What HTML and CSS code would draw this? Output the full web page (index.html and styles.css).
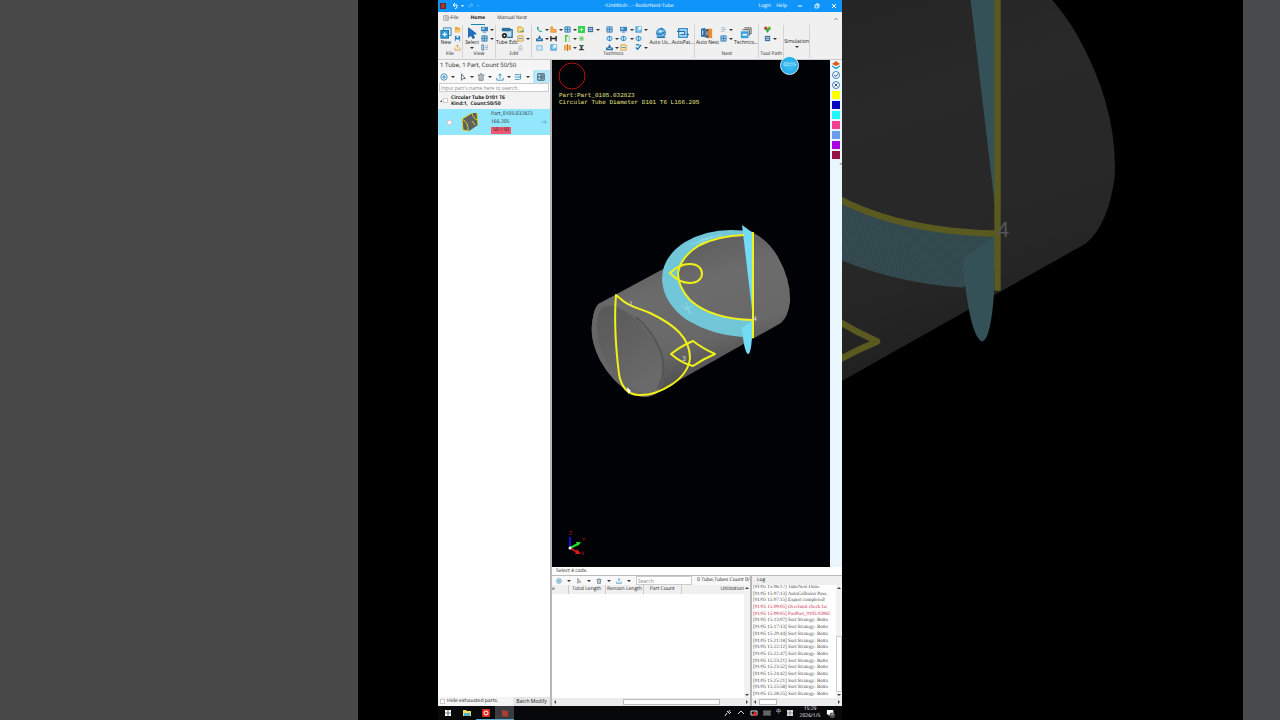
FILE: index.html
```
<!DOCTYPE html>
<html lang="en">
  <head>
    <meta charset="UTF-8" />
    <meta name="viewport" content="width=device-width, initial-scale=1.0" />
    <title>BodorNest-Tube</title>
    <link rel="stylesheet" href="styles.css">
  </head>
  <body>
    <!-- Icon and model definitions -->
    <svg class="defs" aria-hidden="true">
      <defs>
        <linearGradient id="bodyFill" x1="0.35" y1="0.2" x2="0.6" y2="0.85">
          <stop offset="0" stop-color="#626262" />
          <stop offset="0.25" stop-color="#6c6c6c" />
          <stop offset="0.7" stop-color="#686868" />
          <stop offset="1" stop-color="#525252" />
        </linearGradient>
        <linearGradient id="boreFill" x1="0" y1="0" x2="0.6" y2="1">
          <stop offset="0" stop-color="#585858" />
          <stop offset="1" stop-color="#6a6a6a" />
        </linearGradient>
        <pattern id="mesh" width="1" height="1" patternUnits="userSpaceOnUse" patternTransform="rotate(12)">
          <rect width="1" height="1" fill="#76cfe2" />
          <rect width="0.4" height="1" fill="#69b9ca" />
        </pattern>
      </defs>
      <symbol id="tube" viewBox="0 0 1280 720">
        <path fill="url(#bodyFill)" d="M600 303L665 268L712 236Q730 229 752 232Q768 240 778 257Q791 280 790 302Q788 317 781 323L655 394Q646 400 632 394Q612 382 600 360Q590 340 592 324Q594 306 600 303Z" />
        <path fill="#666" d="M600 303Q612 302 630 313Q652 331 663 359Q668 384 655 394Q646 400 632 394Q612 382 600 360Q590 340 592 324Q594 306 600 303Z" />
        <path fill="url(#boreFill)" d="M602 308Q610 303 624 311Q646 325 657 350Q665 375 657 388Q650 396 634 389Q612 375 601 350Q592 322 602 308Z" />
        <path fill="none" stroke="#555" stroke-width="2" d="M636 317Q652 330 661 352Q667 374 658 388" />
        <path fill="url(#mesh)" d="M753 232Q714 225 685 242Q662 257 662 279Q663 303 687 320Q712 335 742 337L753 331V320Q712 319 690 300Q678 288 678 273Q681 257 700 245Q720 236 745 235Z" />
        <path fill="none" stroke="#a5e9f6" stroke-width="0.500" d="M690 245L708 238M696 246L712 236M700 240L722 235M682 305L692 313M686 302L690 314M692 306L684 310" />
        <path fill="#73dcf4" d="M742 225L753 233V318Z" />
        <path fill="#73dcf4" d="M742 328L752 321V337Q751 354 748 354Q744 352 742 328Z" />
        <g fill="none" stroke="#f0f01a" stroke-width="2" stroke-linejoin="round">
          <path d="M744 235Q718 236 700 245Q681 256 678 273Q678 287 690 300Q711 319 753 320" />
          <path d="M753 232V338" />
          <path d="M616 295C614 320 616 350 619 374C621 386 626 394 638 395C658 396 688 380 690 358C690 338 675 325 650 313C638 308 628 306 622 300Z" />
          <path d="M670 273Q679 264 690 264C706 264 706 283 690 283Q679 283 670 273Z" />
          <path d="M671 354Q681 346 693 341Q702 348 715 354Q703 359 693 366Q681 363 671 354Z" />
        </g>
        <path fill="#fff" d="M627 387L631 391L628 394Z" />
      </symbol>

      <symbol id="i-plus" viewBox="0 0 10 10"><circle cx="5" cy="5" r="4" fill="none" stroke="currentColor" /><path d="M5 2.5V7.5M2.5 5H7.5" stroke="currentColor" /></symbol>
      <symbol id="i-pointer" viewBox="0 0 10 10"><path d="M3 1V9L5 7L8 7Z" fill="none" stroke="currentColor" /></symbol>
      <symbol id="i-trash" viewBox="0 0 10 10"><path d="M1 2.5H9M4 1H6M2.5 3V9H7.5V3M5 4V8" fill="none" stroke="currentColor" /></symbol>
      <symbol id="i-export" viewBox="0 0 10 10"><path d="M5 7V1M3 3L5 1L7 3M1 6V9H9V6" fill="none" stroke="currentColor" /></symbol>
      <symbol id="i-sort" viewBox="0 0 10 10"><path d="M1 2H7M1 5H9M1 8H7M8 1V8" fill="none" stroke="currentColor" /></symbol>
      <symbol id="i-panel" viewBox="0 0 10 10"><path d="M1 1H9V9H1ZM1 5H9M5 1V9M6 3H8M6 7H8" fill="none" stroke="currentColor" /></symbol>
      <symbol id="i-new" viewBox="0 0 14 14"><path d="M4 4V1H13V10H10" fill="#cfeaf9" stroke="#2a7fb8" /><rect x="1" y="4" width="9" height="9" fill="#2f9bd8" stroke="#1c6ea6" /><path d="M5.500 6V11M3 8.500H8" stroke="#fff" stroke-width="1.500" /></symbol>
      <symbol id="i-select" viewBox="0 0 14 14"><path d="M3 1L12 8L8 8.500L10 12.500L8 13.500L6 9.500L3 12Z" fill="#1e73c9" stroke="#155a9e" /></symbol>
      <symbol id="i-tubeedit" viewBox="0 0 14 14"><path d="M3 3H13V12H7" fill="#bfe3f5" stroke="#2a6c96" stroke-width="1.500" /><rect x="1" y="1" width="10" height="4" fill="#2b6f9e" /><circle cx="4" cy="10" r="3" fill="#222" /><circle cx="4" cy="10" r="1" fill="#fff" /></symbol>
      <symbol id="i-autouse" viewBox="0 0 14 14"><circle cx="7" cy="7" r="5" fill="#7fc0ea" stroke="#2b8bcb" stroke-width="1.500" /><path d="M7 1L9 3M3 7L6 9L11 6M2 12H12" fill="none" stroke="#2473ad" stroke-width="1.500" /><path d="M5 5H8" stroke="#fff" /></symbol>
      <symbol id="i-autopath" viewBox="0 0 14 14"><rect x="2" y="2" width="10" height="10" fill="#cdebf9" stroke="#2b8bcb" stroke-width="1.500" /><path d="M0 5H9V9H4M14 9H11" fill="none" stroke="#2473ad" stroke-width="1.500" /></symbol>
      <symbol id="i-autonest" viewBox="0 0 14 14"><path d="M0 2L5 1V12L0 11Z" fill="#2c6fa8" /><path d="M5 3L9 2V13L5 12Z" fill="#414d59" /><path d="M9 2H13V13H9Z" fill="#ef8b2c" /><path d="M2 4V9M7 5V10" stroke="#fff" /></symbol>
      <symbol id="i-technics" viewBox="0 0 14 14"><path d="M5 1H13V8H11M3 3H11V10" fill="#ddd" stroke="#555" /><rect x="1" y="5" width="9" height="8" fill="#38a2dc" /><path d="M3 9H8" stroke="#fff" stroke-width="2" /></symbol>

      <symbol id="s-folder" viewBox="0 0 8 8"><path d="M1 1H4L5 2H7V7H1Z" fill="#f0a03c" /><path d="M2 4H8L7 7H1Z" fill="#f8cb75" /></symbol>
      <symbol id="s-save" viewBox="0 0 8 8"><path d="M1 1H7V7H1Z" fill="#2a84c8" /><path d="M3 1H5V3H3ZM2 5H6V7H2Z" fill="#fff" /></symbol>
      <symbol id="s-tray" viewBox="0 0 8 8"><path d="M1 4V7H7V4M4 5V1M2.500 2.500L4 1L5.500 2.500" fill="none" stroke="#e39b45" /></symbol>
      <symbol id="s-tray-off" viewBox="0 0 8 8"><path d="M1 7H7M2 5H6L4 1Z" fill="none" stroke="#b5bcc2" /></symbol>
      <symbol id="s-screen" viewBox="0 0 8 8"><path d="M0 1H8V6H0Z" fill="#3c83bd" /><path d="M2 7H6" stroke="#3c83bd" /><path d="M1 2H4V4H1Z" fill="#a8d8f4" /></symbol>
      <symbol id="s-grid" viewBox="0 0 8 8"><path d="M1 1H7V7H1Z" fill="#9fd0ed" stroke="#397fb4" /><path d="M1 4H7M4 1V7" stroke="#397fb4" /></symbol>
      <symbol id="s-list" viewBox="0 0 8 8"><path d="M1 1H3V7H1Z" fill="none" stroke="#4a7fa8" /><path d="M5 2H8M5 4H8M5 6H8" stroke="#8aa8bf" /></symbol>
      <symbol id="s-note" viewBox="0 0 8 8"><path d="M1 1H5L7 3V7H1Z" fill="#fbe08a" stroke="#c89a28" /><path d="M4 6H8" stroke="#2b82bc" /></symbol>
      <symbol id="s-arc" viewBox="0 0 8 8"><path d="M2 1C1 4 4 7 7 6" fill="none" stroke="#3bb89e" stroke-width="1.500" /><circle cx="2" cy="2" r="1" fill="#2a84c8" /></symbol>
      <symbol id="s-step" viewBox="0 0 8 8"><path d="M1 1H3V4H7V7H1Z" fill="#f6b45e" stroke="#e38d25" /></symbol>
      <symbol id="s-green" viewBox="0 0 8 8"><rect width="8" height="8" fill="#35d24d" /><path d="M2 4H6M4 2V6" stroke="#d8ffd8" /></symbol>
      <symbol id="s-lead" viewBox="0 0 8 8"><path d="M0 7H8V4H6L4 0L2 4H0Z" fill="#2f75ad" /><path d="M2 5H6" stroke="#a9d5f2" /></symbol>
      <symbol id="s-h" viewBox="0 0 8 8"><path d="M1 1V7M7 1V7M1 4H7" stroke="#222" stroke-width="1.500" /></symbol>
      <symbol id="s-bars" viewBox="0 0 8 8"><path d="M2 0V8M2 1H5" stroke="#35c435" stroke-width="1.500" fill="none" /><path d="M6 1V8" stroke="#8bdc8b" /></symbol>
      <symbol id="s-dot" viewBox="0 0 8 8"><circle cx="4" cy="4" r="3" fill="#9ee29c" /><circle cx="4" cy="4" r="1" fill="#49b549" /></symbol>
      <symbol id="s-box" viewBox="0 0 8 8"><rect x="1" y="2" width="6" height="5" fill="#cfeaf8" stroke="#7cb8dc" /></symbol>
      <symbol id="s-boxes" viewBox="0 0 8 8"><rect x="1" y="1" width="6" height="6" fill="#8bcdf0" stroke="#2f93cf" /><path d="M4 1H7V4H4Z" fill="#fff" /></symbol>
      <symbol id="s-weld" viewBox="0 0 8 8"><path d="M0 1H3V7H0ZM5 1H8V7H5Z" fill="#f0a646" /><path d="M4 0V8" stroke="#b66114" /></symbol>
      <symbol id="s-stand" viewBox="0 0 8 8"><path d="M1 1H7L5 3V6H7V7H1V6H3V3Z" fill="#2b2b2b" /><path d="M3 1H5V3H3Z" fill="#4b9b6b" /></symbol>
      <symbol id="s-ring" viewBox="0 0 8 8"><ellipse cx="4" cy="4" rx="3" ry="2.500" fill="#bfe3f7" stroke="#338dca" /><path d="M4 1V7" stroke="#338dca" /></symbol>
      <symbol id="s-check" viewBox="0 0 8 8"><path d="M1 1H5M1 4L3 6L7 1" fill="none" stroke="#1c77be" stroke-width="1.500" /></symbol>
      <symbol id="s-sheet" viewBox="0 0 8 8"><path d="M1 1H7V7H1Z" fill="#fbe7bb" stroke="#d49b3a" /><path d="M2 4H6" stroke="#338dca" /></symbol>
      <symbol id="s-rgb" viewBox="0 0 8 8"><circle cx="2" cy="2.500" r="2" fill="#d8402c" /><circle cx="6" cy="2.500" r="2" fill="#7cb82d" /><path d="M1 3H7L4 8Z" fill="#2da84b" /></symbol>
      <symbol id="s-dash" viewBox="0 0 8 8"><path d="M1 2H6M2 4H7M1 6H5" stroke="#9db7c8" /></symbol>
      <symbol id="s-calc" viewBox="0 0 8 8"><rect x="1" y="1" width="6" height="6" fill="#3a6d9b" /><path d="M2 3H6M2 5H6" stroke="#cfe6f8" /></symbol>
    </svg>

    <svg class="backdrop" viewBox="0 0 1280 720" preserveAspectRatio="xMidYMid slice" aria-hidden="true">
      <rect width="358" height="720" fill="#484848" />
      <rect x="1243" width="37" height="720" fill="#484a4b" />
      <g class="ghost" transform="translate(-1388 -780) scale(3.168)">
        <use href="#tube" width="1280" height="720" />
      </g>
      <text class="ghost-mark" x="997" y="237">4</text>
    </svg>

    <div class="app">
      <header class="titlebar">
        <svg class="logo" viewBox="0 0 8 8"><rect width="8" height="8" fill="#5b2a2a" /><rect x="2" y="1" width="4" height="6" fill="#b23a2a" /></svg>
        <svg class="undo" viewBox="0 0 30 8"><path d="M4 1L2 3L4 5M2 3H6Q7 6 4 7" fill="none" stroke="#fff" /><path d="M10 3H13L11.500 5Z" fill="#fff" /><path d="M20 1L22 3L20 5M22 3H18V6" fill="none" stroke="#59b7fa" /><path d="M26 3H28L27 5Z" fill="#59b7fa" /></svg>
        <h1>&lt;Untitled&gt;.. - BodorNest-Tube</h1>
        <a href="#">Login</a>
        <a href="#">Help</a>
        <div class="window-buttons">
          <button aria-label="Minimize"><svg viewBox="0 0 6 6"><path d="M1 3H5" stroke="#fff" /></svg></button>
          <button aria-label="Restore"><svg viewBox="0 0 6 6"><path d="M1 2H4V5H1ZM2 2V1H5V4H4" fill="none" stroke="#fff" stroke-width="0.800" /></svg></button>
          <button aria-label="Close"><svg viewBox="0 0 6 6"><path d="M1 1L5 5M5 1L1 5" stroke="#fff" /></svg></button>
        </div>
      </header>

      <nav class="tabs">
        <a href="#"><svg viewBox="0 0 8 8"><path d="M1 1H7V7H1ZM3 3H6M3 5H6" fill="none" stroke="#888" /></svg>-File</a>
        <a href="#" class="active">Home</a>
        <a href="#">Manual Nest</a>
        <svg class="collapse" viewBox="0 0 8 8"><path d="M2 5L4 3L6 5" fill="none" stroke="#555" /></svg>
      </nav>

      <div class="ribbon">
        <section class="group file">
          <div class="tools">
            <button class="big"><svg><use href="#i-new" /></svg>New</button>
            <div class="small one">
              <svg><use href="#s-folder" /></svg>
              <svg><use href="#s-save" /></svg>
              <svg><use href="#s-tray" /></svg>
            </div>
          </div>
          <h2>File</h2>
        </section>
        <section class="group view">
          <div class="tools">
            <button class="big"><svg><use href="#i-select" /></svg>Select<i class="caret"></i></button>
            <div class="small two">
              <svg><use href="#s-screen" /></svg><i class="caret"></i>
              <svg><use href="#s-grid" /></svg><i class="caret"></i>
              <svg><use href="#s-list" /></svg>
            </div>
          </div>
          <h2>View</h2>
        </section>
        <section class="group edit">
          <div class="tools">
            <button class="big"><svg><use href="#i-tubeedit" /></svg>Tube Edit</button>
            <div class="small two">
              <svg><use href="#s-note" /></svg><i></i>
              <svg><use href="#s-sheet" /></svg><i class="caret"></i>
              <svg><use href="#s-tray-off" /></svg>
            </div>
          </div>
          <h2>Edit</h2>
        </section>
        <section class="group technics">
          <div class="tools">
            <div class="small nine">
              <svg><use href="#s-arc" /></svg><i class="caret"></i><svg><use href="#s-step" /></svg><i class="caret"></i><svg><use href="#s-grid" /></svg><i class="caret"></i><svg><use href="#s-green" /></svg><svg><use href="#s-calc" /></svg><i class="caret"></i>
              <svg><use href="#s-lead" /></svg><i class="caret"></i><svg><use href="#s-h" /></svg><i></i><svg><use href="#s-bars" /></svg><i class="caret"></i><svg><use href="#s-dot" /></svg><i></i><i></i>
              <svg><use href="#s-box" /></svg><i></i><svg><use href="#s-boxes" /></svg><i></i><svg><use href="#s-weld" /></svg><i class="caret"></i><svg><use href="#s-stand" /></svg><i></i><i></i>
            </div>
            <div class="small six">
              <svg><use href="#s-grid" /></svg><i></i><svg><use href="#s-screen" /></svg><i class="caret"></i><svg><use href="#s-boxes" /></svg><i class="caret"></i>
              <svg><use href="#s-ring" /></svg><i class="caret"></i><svg><use href="#s-ring" /></svg><i class="caret"></i><svg><use href="#s-ring" /></svg><i></i>
              <svg><use href="#s-lead" /></svg><i class="caret"></i><svg><use href="#s-sheet" /></svg><i></i><svg><use href="#s-check" /></svg><i class="caret"></i>
            </div>
            <button class="big"><svg><use href="#i-autouse" /></svg>Auto Us...</button>
            <button class="big"><svg><use href="#i-autopath" /></svg>AutoPat...</button>
          </div>
          <h2>Technics</h2>
        </section>
        <section class="group nest">
          <div class="tools">
            <button class="big"><svg><use href="#i-autonest" /></svg>Auto Nest</button>
            <div class="small two">
              <svg><use href="#s-dash" /></svg><i class="caret"></i>
              <svg><use href="#s-grid" /></svg><i class="caret"></i>
            </div>
            <button class="big"><svg><use href="#i-technics" /></svg>Technics...</button>
          </div>
          <h2>Nest</h2>
        </section>
        <section class="group path">
          <div class="tools">
            <div class="small two">
              <svg><use href="#s-rgb" /></svg><i></i>
              <svg><use href="#s-calc" /></svg><i class="caret"></i>
            </div>
          </div>
          <h2>Tool Path</h2>
        </section>
        <section class="group simulation">
          <button class="big">Simulation<i class="caret"></i></button>
        </section>
      </div>

      <main class="workspace">
        <aside class="parts">
          <p class="summary">1 Tube, 1 Part, Count 50/50</p>
          <div class="toolbar">
            <svg><use href="#i-plus" /></svg><i class="caret"></i>
            <svg class="dark"><use href="#i-pointer" /></svg><i class="caret"></i>
            <svg class="dark"><use href="#i-trash" /></svg><i class="caret"></i>
            <svg><use href="#i-export" /></svg><i class="caret"></i>
            <svg><use href="#i-sort" /></svg><i class="caret"></i>
            <button class="toggle" aria-label="Thumbnails"><svg><use href="#i-panel" /></svg></button>
          </div>
          <input class="search" type="text" aria-label="Part name" placeholder="Input part's name here to search." />
          <div class="part-group">
            <i class="expander"></i>
            <input type="checkbox" id="tubeGroup" />
            <label for="tubeGroup">Circular Tube D101 T6<br />Kind:1,&nbsp; Count:50/50</label>
          </div>
          <div class="part">
            <input type="checkbox" aria-label="Part_0105.032823" />
            <svg class="thumb" viewBox="0 0 20 22"><path d="M2 8L12 2L17 2L18 14L9 20L3 19Z" fill="#5f5f5f" /><path d="M2 8L3 19L8 20Q9 12 2 8L12 2Q13 8 18 9M12 10L15 14M17 2L18 14" fill="none" stroke="#d9d32a" /></svg>
            <div class="part-info">
              <span>Part_0105.032823</span>
              <span>166.205</span>
              <span class="count">50 / 50</span>
            </div>
            <svg class="arrow" viewBox="0 0 8 8"><path d="M1 4H7M5 2L7 4L5 6" fill="none" stroke="#5aa3bd" /></svg>
          </div>
          <div class="parts-footer">
            <input type="checkbox" id="hideParts" />
            <label for="hideParts">Hide exhausted parts.</label>
            <button>Batch Modify</button>
          </div>
        </aside>

        <div class="right">
          <div class="stage">
            <div class="viewport">
              <svg class="scene" viewBox="552 60 278 507" preserveAspectRatio="xMidYMid meet">
                <circle cx="572" cy="76" r="13" fill="none" stroke="#b01414" />
                <use href="#tube" width="1280" height="720" />
                <g class="mark">
                  <text x="629" y="306">1</text>
                  <text x="682" y="361">3</text>
                  <text x="753" y="321">4</text>
                </g>
                <path d="M570 548V537" stroke="#1212d8" stroke-width="2" />
                <path d="M570 548L578 544" stroke="#27e02e" stroke-width="2" />
                <path d="M576 542L581 542L578 546Z" fill="#27e02e" />
                <path d="M570 548L577 552" stroke="#d81818" stroke-width="2" />
                <path d="M577 549L581 554L575 554Z" fill="#d81818" />
                <circle cx="570" cy="548" r="1.500" fill="#fff" />
                <g class="axis">
                  <text x="569" y="535">Z</text>
                  <text x="582" y="541">Y</text>
                  <text x="581" y="555">X</text>
                </g>
              </svg>
              <p class="readout">Part:Part_0105.032823<br />Circular Tube Diameter D101 T6 L166.205</p>
              <span class="timer">02:15</span>
            </div>
            <div class="layers">
              <svg viewBox="0 0 8 8"><path d="M4 0L8 3L4 5L0 3Z" fill="#e05a1e" /><path d="M0 5L4 7L8 5L4 8Z" fill="#2aa4c8" stroke="#2aa4c8" /></svg>
              <svg viewBox="0 0 8 8"><circle cx="4" cy="4" r="3.500" fill="#fff" stroke="#1d5f9c" stroke-width="0.800" /><path d="M2 4L4 5.500L6 2.500" fill="none" stroke="#1d5f9c" /></svg>
              <svg viewBox="0 0 8 8"><circle cx="4" cy="4" r="3.500" fill="#fff" stroke="#1d5f9c" stroke-width="0.800" /><path d="M2.500 2.500L5.500 5.500M5.500 2.500L2.500 5.500" stroke="#1d5f9c" /></svg>
              <i class="swatch yellow"></i>
              <i class="swatch blue"></i>
              <i class="swatch cyan"></i>
              <i class="swatch pink"></i>
              <i class="swatch sky"></i>
              <i class="swatch purple"></i>
              <i class="swatch maroon"></i>
              <span class="more">»</span>
            </div>
          </div>
          <p class="status">Select 4 cade.</p>
          <div class="bottom">
            <section class="tubes">
              <div class="toolbar">
                <svg><use href="#i-plus" /></svg><i class="caret"></i>
                <svg class="dark"><use href="#i-pointer" /></svg><i class="caret"></i>
                <svg class="dark"><use href="#i-trash" /></svg><i class="caret"></i>
                <svg><use href="#i-export" /></svg><i class="caret"></i>
                <input class="search" type="text" aria-label="Tube name" placeholder="Search" />
                <span class="tube-count">0 Tube,Tubes Count 0/1</span>
              </div>
              <div class="table-area">
                <table>
                  <thead>
                    <tr><th class="name">e</th><th>Total Length</th><th>Remain Length</th><th>Part Count</th><th class="util">Utilization</th></tr>
                  </thead>
                </table>
                <div class="vscroll"><i class="up"></i><i class="down"></i></div>
              </div>
              <div class="hscroll"><i class="back"></i><i class="thumb"></i><i class="next"></i></div>
            </section>
            <section class="log">
              <h2>Log</h2>
              <div class="log-area">
                <ol>
                  <li>[01/05 15:06:17] TubeNest Done.</li>
                  <li>[01/05 15:07:13] AutoCollision Pass.</li>
                  <li>[01/05 15:07:15] Export completed!</li>
                  <li class="error">[01/05 15:09:05] Overlimit check fai</li>
                  <li class="error">[01/05 15:09:05] PartPart_0105.03082</li>
                  <li>[01/05 15:13:07] Sort Strategy: Botto</li>
                  <li>[01/05 15:17:13] Sort Strategy: Botto</li>
                  <li>[01/05 15:20:44] Sort Strategy: Botto</li>
                  <li>[01/05 15:21:18] Sort Strategy: Botto</li>
                  <li>[01/05 15:22:12] Sort Strategy: Botto</li>
                  <li>[01/05 15:22:47] Sort Strategy: Botto</li>
                  <li>[01/05 15:23:21] Sort Strategy: Botto</li>
                  <li>[01/05 15:23:52] Sort Strategy: Botto</li>
                  <li>[01/05 15:24:42] Sort Strategy: Botto</li>
                  <li>[01/05 15:25:21] Sort Strategy: Botto</li>
                  <li>[01/05 15:25:58] Sort Strategy: Botto</li>
                  <li>[01/05 15:28:25] Sort Strategy: Botto</li>
                </ol>
                <div class="vscroll"><i class="up"></i><i class="thumb"></i><i class="down"></i></div>
              </div>
              <div class="hscroll"><i class="back"></i><i class="thumb"></i><i class="next"></i></div>
            </section>
          </div>
        </div>
      </main>

      <footer class="taskbar">
        <button aria-label="Start"><svg viewBox="0 0 8 8"><path d="M1 1H3.700V3.700H1ZM4.300 1H7V3.700H4.300ZM1 4.300H3.700V7H1ZM4.300 4.300H7V7H4.300Z" fill="#fff" /></svg></button>
        <button aria-label="Files"><svg viewBox="0 0 8 8"><path d="M0 1H3L4 2H8V7H0Z" fill="#f3d865" /><path d="M1 4H7V7H1Z" fill="#54b6c4" /></svg></button>
        <button aria-label="Recorder" class="open"><svg viewBox="0 0 8 8"><rect width="8" height="8" rx="1" fill="#dc2b1c" /><circle cx="4" cy="4" r="2" fill="none" stroke="#fff" /></svg></button>
        <button aria-label="BodorNest-Tube" class="open current"><svg viewBox="0 0 8 8"><path d="M1 1L7 2V8L1 7Z" fill="#a8402f" /></svg></button>
        <div class="tray">
          <svg viewBox="0 0 8 8"><path d="M1 7L3 4M3 2L6 5M4 4L6 1M5 5L7 3" stroke="#ddd" fill="none" /></svg>
          <svg viewBox="0 0 8 8"><path d="M1 5L4 2L7 5" stroke="#ddd" fill="none" /></svg>
          <svg viewBox="0 0 8 8"><path d="M1 2H7V6H1Z" stroke="#ddd" fill="none" /><circle cx="5" cy="5" r="2" fill="#e02828" /></svg>
          <svg viewBox="0 0 8 8"><path d="M0 2H8V6H0ZM1 4H7M2 2V6M4 2V6M6 2V6" stroke="#aaa" fill="none" stroke-width="0.700" /></svg>
          <span>中</span>
          <svg viewBox="0 0 8 8"><path d="M1 1H7V7H1Z" fill="#ddd" /><path d="M1 4H7M4 1V7" stroke="#666" stroke-width="0.600" /></svg>
        </div>
        <time>15:29<br />2026/1/5</time>
        <div class="notices">
          <svg viewBox="0 0 10 10"><path d="M1 1H8V6H5L3 8V6H1Z" fill="#fff" /><circle cx="7" cy="7" r="3" fill="#555" /></svg>
          <span>2</span>
        </div>
      </footer>
    </div>
  </body>
</html>
```
FILE: styles.css
```
* {
  box-sizing: border-box;
}

body {
  margin: 0;
  min-height: 100vh;
  background: #000;
  color: #222;
  font-family: "Open Sans", "Noto Sans", "Noto Sans CJK SC", sans-serif;
  font-size: 5px;
  line-height: 7px;
  text-rendering: geometricPrecision;
  display: grid;
  grid-template-columns: 1fr minmax(404px, 31%) 1fr;
  overflow: hidden;
}

h1,
h2,
p,
ol {
  margin: 0;
  padding: 0;
  font-size: 5px;
  font-weight: normal;
}

a {
  color: inherit;
  text-decoration: none;
}

button {
  padding: 0;
  border: none;
  background: none;
  color: inherit;
  font: inherit;
}

input {
  margin: 0;
  font: inherit;
}

input[type="checkbox"] {
  appearance: none;
  width: 5px;
  height: 5px;
  flex: none;
  background: #fff;
  border: 1px solid #ccc;
}

.defs {
  position: absolute;
  width: 0;
  height: 0;
}

.backdrop {
  position: absolute;
  inset: 0;
  width: 100%;
  height: 100%;
}

.ghost {
  opacity: 0.38;
  filter: saturate(0.7);
}

.ghost-mark {
  fill: #555;
  font-family: "Liberation Sans", sans-serif;
  font-size: 22px;
}

.mark text {
  fill: #ddd;
  font-family: "Liberation Sans", sans-serif;
  font-size: 7px;
}

.app {
  grid-column: 2;
  position: relative;
  display: flex;
  flex-direction: column;
  height: 100vh;
  background: #f0f0f0;
}

.caret {
  flex: none;
  width: 4px;
  justify-self: center;
  border: 2px solid transparent;
  border-top-color: #333;
  border-bottom: none;
}

/* Title bar */
.titlebar {
  display: flex;
  align-items: center;
  gap: 5px;
  height: 12px;
  background: #0f95fa;
  color: #fff;
}

.titlebar .logo {
  width: 6px;
  height: 6px;
  margin-left: 2px;
}

.titlebar .undo {
  width: 30px;
  height: 8px;
}

.titlebar h1 {
  flex: 1;
  text-align: center;
  padding-left: 38px;
}

.window-buttons {
  display: flex;
  width: 50px;
}

.window-buttons button {
  flex: 1;
  display: grid;
  place-items: center;
}

.window-buttons svg {
  width: 6px;
  height: 6px;
}

/* Tabs */
.tabs {
  display: flex;
  align-items: center;
  gap: 12px;
  height: 13px;
  padding: 0 3px 0 5px;
}

.tabs a {
  display: flex;
  align-items: center;
  height: 13px;
  border-bottom: 1px solid transparent;
}

.tabs svg {
  width: 6px;
  height: 6px;
}

.tabs .active {
  font-weight: bold;
  border-bottom-color: #1d7fb5;
}

.tabs .collapse {
  margin-left: auto;
}

/* Ribbon */
.ribbon {
  display: flex;
  height: 35px;
  padding: 0 32px 1px 0;
  border-bottom: 1px solid #ccc;
}

.group {
  display: flex;
  flex-direction: column;
  justify-content: space-between;
  border-right: 1px solid #d4d4d4;
  white-space: nowrap;
}

.group h2 {
  text-align: center;
}

.file {
  width: 25px;
}

.view {
  width: 34px;
}

.edit {
  width: 36px;
}

.technics {
  flex: 1;
}

.nest {
  width: 65px;
}

.path {
  width: 25px;
}

.simulation {
  width: 26px;
}

.tools {
  display: flex;
  height: 26px;
}

.big {
  display: flex;
  flex-direction: column;
  align-items: center;
  flex: 1;
  min-width: 0;
  padding-top: 2px;
}

.big svg {
  width: 12px;
  height: 12px;
}

.big .caret {
  margin-top: 1px;
}

.simulation .big {
  justify-content: center;
}

.small {
  display: grid;
  grid-auto-rows: 9px;
  align-items: center;
}

.small svg {
  width: 7px;
  height: 7px;
}

.one {
  grid-template-columns: 8px;
}

.two {
  grid-template-columns: 8px 6px;
}

.path .two {
  margin: 0 auto;
}

.nine {
  grid-template-columns: 8px 6px 8px 6px 8px 6px 9px 8px 6px;
  padding-left: 4px;
}

.six {
  grid-template-columns: 8px 6px 8px 7px 8px 6px;
  padding-left: 5px;
}

/* Workspace */
.workspace {
  flex: 1;
  min-height: 0;
  display: flex;
}

.parts {
  width: 112px;
  display: flex;
  flex-direction: column;
  background: #fff;
}

.parts .summary {
  padding: 1px 2px;
  height: 10px;
  font-size: 6px;
  line-height: 8px;
  background: #f5f5f5;
}

.toolbar {
  display: flex;
  align-items: center;
  justify-content: space-between;
  color: #2683b5;
  background: #f8f8f8;
}

.toolbar svg {
  width: 8px;
  height: 8px;
}

.toolbar .dark {
  color: #456;
}

.parts .toolbar {
  height: 13px;
  padding-left: 2px;
}

.toggle {
  width: 17px;
  height: 13px;
  display: grid;
  place-items: center;
  background: #b7e8fa;
}

.toggle svg {
  color: #234;
}

.search {
  border: 1px solid #ccc;
  background: #fff;
  padding: 0 1px;
}

.search::placeholder {
  color: #888;
}

.parts .search {
  height: 9px;
  margin: 0 1px;
}

.part-group {
  display: flex;
  align-items: center;
  gap: 1px;
  height: 17px;
  padding-left: 2px;
  background: #f2f2f2;
  font-weight: bold;
  line-height: 6px;
}

.expander {
  border: 1px solid transparent;
  border-right-color: #333;
  border-bottom-color: #333;
}

.part-group label {
  padding-left: 2px;
}

.part {
  display: flex;
  align-items: center;
  height: 26px;
  padding: 0 3px 0 9px;
  background: #92e7fd;
}

.part .thumb {
  width: 20px;
  height: 22px;
  margin: 0 11px 0 8px;
}

.part-info {
  flex: 1;
  display: flex;
  flex-direction: column;
  align-items: flex-start;
  gap: 1px;
}

.count {
  padding: 0 2px;
  background: #f0566c;
}

.arrow {
  width: 6px;
  height: 6px;
}

.parts-footer {
  display: flex;
  align-items: center;
  gap: 2px;
  height: 9px;
  margin-top: auto;
  padding-left: 2px;
  background: #f5f5f5;
}

.parts-footer button {
  margin-left: auto;
  width: 37px;
  height: 9px;
  background: #e6e6e6;
}

.right {
  flex: 1;
  min-width: 0;
  display: flex;
  flex-direction: column;
  border-left: 2px solid #b8b8b8;
}

.stage {
  flex: 1;
  min-height: 0;
  display: flex;
}

.viewport {
  position: relative;
  flex: 1;
  background: #010205;
}

.scene {
  display: block;
  width: 100%;
  height: 100%;
}

.axis text {
  fill: #c22;
  font-family: "Liberation Sans", sans-serif;
  font-size: 5px;
}

.readout {
  position: absolute;
  top: 32px;
  left: 7px;
  color: #e2e284;
  font-family: "Liberation Mono", monospace;
  font-size: 6px;
  white-space: nowrap;
}

.timer {
  position: absolute;
  top: -4px;
  right: 31px;
  width: 19px;
  height: 19px;
  border: 1px solid #d5f1fd;
  border-radius: 50%;
  background: radial-gradient(#45c4f4, #169fe8);
  color: #fff;
  line-height: 17px;
  text-align: center;
}

.layers {
  width: 12px;
  display: flex;
  flex-direction: column;
  align-items: center;
  gap: 2px;
  padding-top: 1px;
  background: #e9f6fd;
}

.layers svg,
.swatch {
  width: 8px;
  height: 8px;
}

.yellow {
  background: #ffff00;
}

.blue {
  background: #0505c0;
}

.cyan {
  background: #1ff5fb;
}

.pink {
  background: #f43d93;
}

.sky {
  background: #6c9cee;
}

.purple {
  background: #a805e2;
}

.maroon {
  background: #931445;
}

.more {
  align-self: flex-end;
}

.status {
  height: 8px;
  padding: 1px 4px 0;
  background: #fff;
}

/* Bottom panels */
.bottom {
  display: flex;
  height: 131px;
  border-top: 1px solid #bbb;
}

.tubes {
  flex: 1;
  min-width: 0;
  display: flex;
  flex-direction: column;
}

.tubes .toolbar {
  height: 9px;
  padding-left: 4px;
  gap: 5px;
}

.tubes .toolbar svg {
  width: 6px;
  height: 6px;
  flex: none;
}

.tubes .search {
  width: 56px;
  height: 9px;
}

.tube-count {
  flex: 1;
  overflow: hidden;
  color: #222;
  white-space: nowrap;
}

.table-area,
.log-area {
  flex: 1;
  min-height: 0;
  display: flex;
  background: #fff;
}

.table-area table {
  flex: 1;
  width: 100%;
  align-self: flex-start;
  table-layout: fixed;
  border-collapse: collapse;
}

th {
  height: 9px;
  padding: 0;
  background: #f0f0f0;
  border-right: 1px solid #ccc;
  font-weight: normal;
  white-space: nowrap;
}

th.name {
  width: 16px;
  text-align: left;
}

th.util {
  width: 63px;
  border-right: none;
  text-align: right;
}

.vscroll {
  flex: none;
  width: 6px;
  display: flex;
  flex-direction: column;
  align-items: center;
  justify-content: space-between;
  padding: 2px 0;
  background: #f2f2f2;
}

.vscroll .thumb {
  width: 6px;
  height: 56px;
  margin: auto 0 2px;
  border: 1px solid #ccc;
  background: #fff;
}

.up,
.down {
  border: 2px solid transparent;
}

.up {
  border-top: none;
  border-bottom-color: #444;
}

.down {
  border-bottom: none;
  border-top-color: #444;
}

.hscroll {
  display: flex;
  align-items: center;
  justify-content: space-between;
  height: 8px;
  padding: 0 2px;
  background: #ececec;
}

.hscroll .thumb {
  height: 6px;
  border: 1px solid #bbb;
  background: #fff;
}

.back,
.next {
  border: 2px solid transparent;
}

.back {
  border-left: none;
  border-right-color: #444;
}

.next {
  border-right: none;
  border-left-color: #444;
}

.tubes .hscroll .thumb {
  width: 50%;
  margin-left: 40px;
}

.log .hscroll .thumb {
  width: 18px;
  margin: 0 auto 0 3px;
}

.log {
  width: 92px;
  display: flex;
  flex-direction: column;
  border-left: 2px solid #b8b8b8;
}

.log h2 {
  height: 9px;
  padding: 1px 5px;
}

.log ol {
  flex: 1;
  min-width: 0;
  display: flex;
  flex-direction: column;
  justify-content: space-between;
  padding-left: 1px;
  overflow: hidden;
  list-style: none;
  color: #444;
  font-family: "Liberation Serif", serif;
  line-height: 6px;
  white-space: nowrap;
}

.log .error {
  color: #c81e46;
}

/* Taskbar */
.taskbar {
  display: flex;
  align-items: center;
  height: 14px;
  background: #07080a;
  color: #fff;
}

.taskbar svg {
  width: 8px;
  height: 8px;
}

.taskbar button {
  width: 19px;
  height: 14px;
  display: grid;
  place-items: center;
  border-bottom: 1px solid transparent;
}

.taskbar .open {
  border-bottom-color: #5ba7c9;
}

.taskbar .current {
  background: #3a3c40;
}

.tray {
  display: flex;
  gap: 5px;
  margin-left: auto;
}

.taskbar time {
  width: 32px;
  text-align: center;
}

.notices {
  position: relative;
  width: 16px;
}

.notices svg {
  display: block;
  width: 9px;
  height: 9px;
}

.notices span {
  position: absolute;
  left: 5px;
  top: 2px;
}
```
